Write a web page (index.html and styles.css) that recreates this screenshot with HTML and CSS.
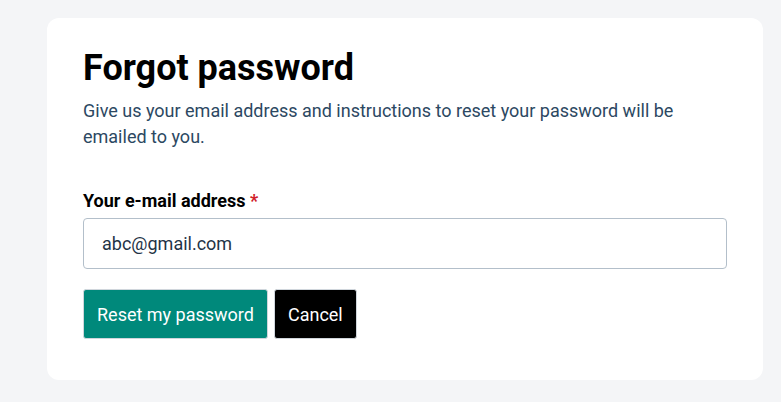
FILE: index.html
```html
<!DOCTYPE html>
<html lang="en">
<head>
<meta charset="utf-8">
<title>Forgot password</title>
<link rel="stylesheet" href="styles.css">
</head>
<body>
<main class="card">
  <h1 class="title">Forgot password</h1>
  <p class="intro">Give us your email address and instructions to reset your password will be emailed to you.</p>
  <form class="form">
    <label class="label" for="email">Your e-mail address <span class="req">*</span></label>
    <input class="input" id="email" type="email" value="abc@gmail.com">
    <div class="actions">
      <button type="button" class="btn btn-primary">Reset my password</button>
      <button type="button" class="btn btn-dark">Cancel</button>
    </div>
  </form>
</main>
</body>
</html>
```
FILE: styles.css
```css
* { box-sizing: border-box; }
html, body { margin: 0; padding: 0; }
body {
  background: #f4f5f7;
  font-family: Roboto, "Liberation Sans", sans-serif;
  padding: 18px 18px 22px 47px;
}
.card {
  background: #ffffff;
  border-radius: 12px;
  padding: 28px 36px 41px 36px;
  width: 716px;
}
.title {
  margin: 0;
  font-size: 36px;
  font-weight: 700;
  line-height: 44px;
  color: #000;
}
.intro {
  margin: 8px 0 0;
  font-size: 18px;
  line-height: 26px;
  color: #2c4862;
}
.form {
  display: flex;
  flex-direction: column;
  margin-top: 40px;
}
.label {
  font-size: 18px;
  font-weight: 700;
  line-height: 22px;
  color: #000;
}
.req { color: #d0202a; }
.input {
  margin-top: 6px;
  height: 51px;
  border: 1px solid #b3bfca;
  border-radius: 4px;
  padding: 0 18px;
  font-family: inherit;
  font-size: 18px;
  color: #1f3447;
  outline: none;
}
.actions {
  display: flex;
  gap: 6px;
  margin-top: 20px;
}
.btn {
  height: 50px;
  border: 1px solid #d0d6dc;
  border-radius: 3px;
  padding: 0 13px;
  font-family: inherit;
  font-size: 18px;
  color: #fff;
  cursor: pointer;
}
.btn-primary { background: #00897b; }
.btn-dark { background: #000; }
```
